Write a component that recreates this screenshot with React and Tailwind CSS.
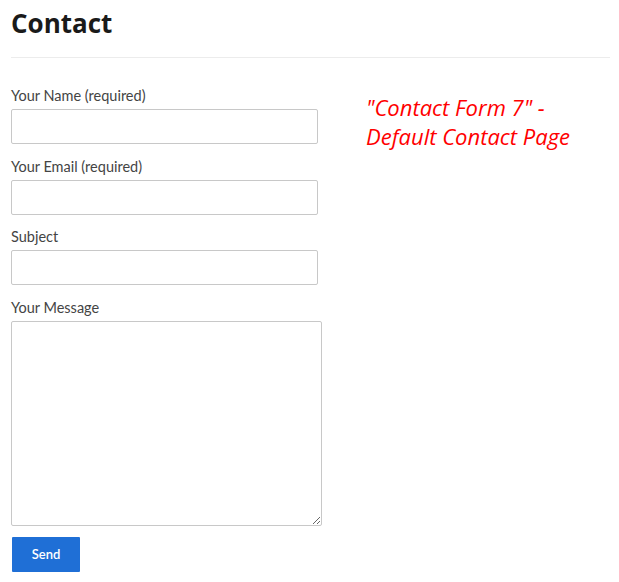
import React from 'react';

const Field = ({ label, children }) => (
  <div className="flex flex-col">
    <label className="text-[14.5px] leading-[18px] text-[#444] mb-[4px]">{label}</label>
    {children}
  </div>
);

export default function App() {
  return (
    <div className="min-h-[582px] w-[619px] bg-white pl-[11px] pr-[9px] pt-[6px] font-['Lato',sans-serif]">
      <h1 className="text-[26px] leading-[34px] font-bold text-[#1a1a1a] font-['Open_Sans',sans-serif]">
        Contact
      </h1>
      <hr className="mt-[17px] border-0 border-t border-[#ececec]" />

      <div className="flex mt-[29px]">
        <form className="flex flex-col gap-[14px] w-[311px]" onSubmit={(e) => e.preventDefault()}>
          <Field label="Your Name (required)">
            <input className="block w-[307px] h-[35px] border border-[#c8c8c8] rounded-[2px] bg-white" />
          </Field>
          <Field label="Your Email (required)">
            <input className="block w-[307px] h-[35px] border border-[#c8c8c8] rounded-[2px] bg-white" />
          </Field>
          <div className="-mt-[1px]">
            <Field label="Subject">
              <input className="block w-[307px] h-[35px] border border-[#c8c8c8] rounded-[2px] bg-white" />
            </Field>
          </div>
          <Field label="Your Message">
            <textarea className="block w-[311px] h-[205px] border border-[#c8c8c8] rounded-[2px] bg-white" />
          </Field>
          <div className="-mt-[3px]">
            <button className="block ml-[1px] w-[68px] h-[35px] bg-[#1f6fd6] text-white text-[13px] font-semibold rounded-[1px]">
              Send
            </button>
          </div>
        </form>

        <div className="ml-[44px] mt-[6px] text-[22px] leading-[29px] italic text-[#ff0000] font-['Open_Sans',sans-serif]">
          "Contact Form 7" -<br />Default Contact Page
        </div>
      </div>
    </div>
  );
}
